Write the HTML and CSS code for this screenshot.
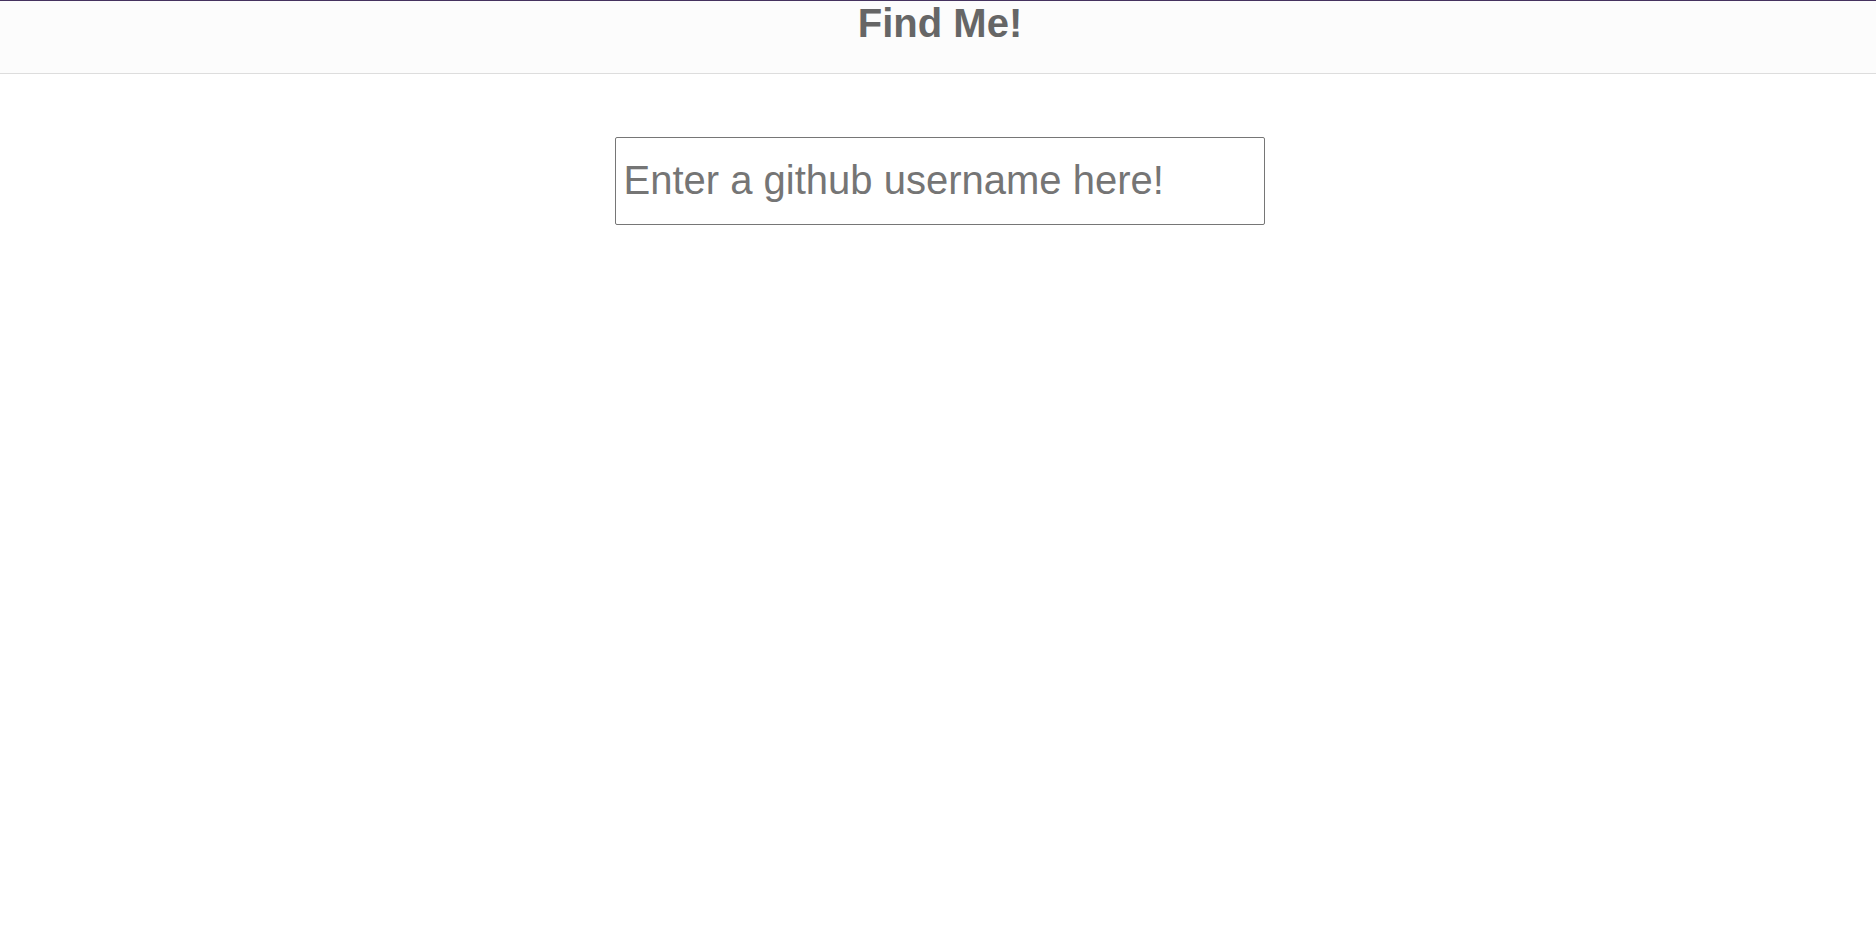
FILE: index.html
```html
<!DOCTYPE html>
<html lang="en">
<head>
<meta charset="utf-8">
<title>Find Me!</title>
<link rel="stylesheet" href="styles.css">
</head>
<body>
<header class="topbar">
  <h1 class="title">Find Me!</h1>
</header>
<main class="content">
  <input class="search" type="text" placeholder="Enter a github username here!">
</main>
</body>
</html>
```
FILE: styles.css
```css
html, body {
  margin: 0;
  padding: 0;
  background: #ffffff;
  font-family: "Liberation Sans", Arial, sans-serif;
}
.topbar {
  box-sizing: border-box;
  height: 74px;
  padding-left: 4px;
  background: #fcfcfc;
  border-top: 1px solid #45325f;
  border-bottom: 1px solid #dddddd;
  text-align: center;
}
.title {
  margin: 0;
  font-size: 40px;
  font-weight: bold;
  color: #666666;
  line-height: normal;
}
.content {
  display: flex;
  justify-content: center;
  padding-top: 63px;
}
.search {
  box-sizing: border-box;
  width: 650px;
  height: 88px;
  margin-left: 3px;
  padding: 0 7px 2px 8px;
  border: 1px solid #767676;
  border-radius: 2px;
  font-family: "Liberation Sans", Arial, sans-serif;
  font-size: 40px;
  color: #333333;
  background: #ffffff;
  outline: none;
}
.search::placeholder {
  color: #757575;
  opacity: 1;
}
```
